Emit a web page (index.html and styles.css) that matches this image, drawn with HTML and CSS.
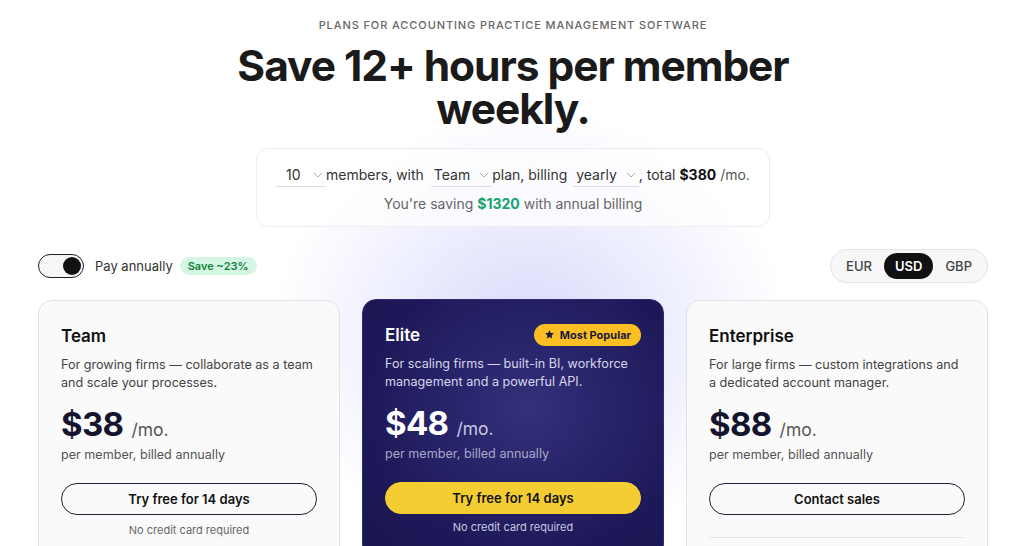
FILE: index.html
```html
<!DOCTYPE html>
<html lang="en">
<head>
<meta charset="utf-8">
<title>Pricing</title>
<link rel="stylesheet" href="styles.css">
</head>
<body>
<div class="glow"></div>
<main class="page">
  <header class="hero">
    <p class="eyebrow">Plans for accounting practice management software</p>
    <h1 class="title">Save 12+ hours per member<br>weekly.</h1>
  </header>

  <section class="calc">
    <div class="calc-row">
      <span class="sel sel-num"><span>10</span><svg class="chev" viewBox="0 0 10 6"><path d="M1 1l4 4 4-4"/></svg></span>members, with
      <span class="sel sel-plan"><span>Team</span><svg class="chev" viewBox="0 0 10 6"><path d="M1 1l4 4 4-4"/></svg></span>plan, billing
      <span class="sel sel-bill"><span>yearly</span><svg class="chev" viewBox="0 0 10 6"><path d="M1 1l4 4 4-4"/></svg></span>, total <strong>$380</strong> <span class="muted">/mo.</span>
    </div>
    <div class="calc-save">You're saving <strong class="green">$1320</strong> with annual billing</div>
  </section>

  <div class="controls">
    <div class="pay">
      <span class="toggle"><span class="knob"></span></span>
      <span class="pay-label">Pay annually</span>
      <span class="save-badge">Save ~23%</span>
    </div>
    <div class="currency">
      <span class="cur">EUR</span>
      <span class="cur active">USD</span>
      <span class="cur">GBP</span>
    </div>
  </div>

  <section class="cards">
    <article class="card">
      <h2 class="card-title">Team</h2>
      <p class="card-desc">For growing firms — collaborate as a team and scale your processes.</p>
      <div class="price"><span class="amount">$38</span><span class="per">/mo.</span></div>
      <p class="billed">per member, billed annually</p>
      <button class="btn">Try free for 14 days</button>
      <p class="note">No credit card required</p>
    </article>

    <article class="card card-elite">
      <div class="card-head">
        <h2 class="card-title">Elite</h2>
        <span class="popular"><svg class="star" viewBox="0 0 24 24"><path d="M12 2.5l2.9 6.1 6.6.8-4.9 4.6 1.3 6.6L12 17.3l-5.9 3.3 1.3-6.6-4.9-4.6 6.6-.8z"/></svg>Most Popular</span>
      </div>
      <p class="card-desc">For scaling firms — built-in BI, workforce management and a powerful API.</p>
      <div class="price"><span class="amount">$48</span><span class="per">/mo.</span></div>
      <p class="billed">per member, billed annually</p>
      <button class="btn btn-yellow">Try free for 14 days</button>
      <p class="note">No credit card required</p>
    </article>

    <article class="card">
      <h2 class="card-title">Enterprise</h2>
      <p class="card-desc">For large firms — custom integrations and a dedicated account manager.</p>
      <div class="price"><span class="amount">$88</span><span class="per">/mo.</span></div>
      <p class="billed">per member, billed annually</p>
      <button class="btn">Contact sales</button>
      <hr class="divider">
    </article>
  </section>
</main>
</body>
</html>
```

FILE: styles.css
```css
* { box-sizing: border-box; }
html, body { margin: 0; padding: 0; }
body {
  font-family: Inter, "Noto Sans", "Liberation Sans", sans-serif;
  color: #111;
  background: #fff;
  overflow: hidden;
  position: relative;
  min-height: 546px;
  padding-left: 2px;
}
.glow {
  position: absolute;
  left: 270px;
  top: 110px;
  width: 520px;
  height: 440px;
  background: radial-gradient(ellipse at center, rgba(170,172,245,0.45) 0%, rgba(190,192,250,0.25) 40%, rgba(255,255,255,0) 70%);
  pointer-events: none;
}
.page {
  position: relative;
  width: 950px;
  margin: 0 auto;
  padding-top: 18px;
}
.hero { text-align: center; }
.eyebrow {
  margin: 0;
  font-size: 11px;
  line-height: 14px;
  letter-spacing: 0.9px;
  text-transform: uppercase;
  color: #666;
  font-weight: 500;
}
.title {
  margin: 12px 0 0;
  font-size: 42.5px;
  line-height: 43px;
  font-weight: 700;
  letter-spacing: -0.025em;
  color: #1a1a1a;
}
.calc {
  width: 514px;
  margin: 18px auto 0;
  border: 1px solid #ececf2;
  border-radius: 12px;
  background: rgba(255,255,255,0.7);
  padding: 15px 0 12px;
  text-align: center;
  font-size: 14px;
  color: #333;
}
.calc-row { line-height: 22px; }
.calc-row strong { color: #111; font-weight: 700; }
.muted { color: #555; }
.sel {
  display: inline-flex;
  align-items: center;
  border-bottom: 1px solid #dcdce6;
  height: 22px;
  padding: 0 2px 0 3px;
  color: #333;
}
.sel-num { width: 50px; padding-left: 10px; }
.sel-num .chev { margin-left: auto; }
.sel-plan { margin-left: 3px; }
.sel-bill { margin-left: 2px; }
.chev {
  width: 10px;
  height: 6px;
  fill: none;
  stroke: #aaa;
  stroke-width: 1;
  margin-left: 9px;
  margin-right: 1px;
}
.calc-save {
  margin-top: 7px;
  line-height: 20px;
  color: #666;
}
.green { color: #16a36a; font-weight: 700; }

.controls {
  display: flex;
  justify-content: space-between;
  align-items: center;
  margin-top: 22px;
}
.pay { display: flex; align-items: center; }
.toggle {
  width: 46px;
  height: 24px;
  border: 1.5px solid #222;
  border-radius: 12px;
  background: #f6f6f8;
  display: flex;
  align-items: center;
  justify-content: flex-end;
  padding: 0 2px;
}
.knob { width: 18px; height: 18px; border-radius: 50%; background: #111; }
.pay-label { margin-left: 11px; font-size: 13px; color: #333; }
.save-badge {
  margin-left: 7px;
  background: #d4f6e2;
  color: #15803d;
  font-size: 11px;
  font-weight: 600;
  border-radius: 9px;
  padding: 2px 8px;
  line-height: 14px;
}
.currency {
  display: flex;
  align-items: center;
  border: 1px solid #e3e3e8;
  border-radius: 17px;
  height: 34px;
  padding: 0 3px;
  background: #f7f7f8;
}
.cur {
  font-size: 13px;
  font-weight: 500;
  color: #444;
  padding: 0 12px;
  height: 26px;
  line-height: 26px;
  border-radius: 13px;
}
.cur.active { background: #111; color: #fff; font-weight: 600; padding: 0 11px; }

.cards {
  display: grid;
  grid-template-columns: repeat(3, 302px);
  gap: 22px;
  margin-top: 17px;
}
.card {
  border: 1px solid #e2e2e6;
  border-radius: 14px;
  background: #fafafa;
  padding: 24px 22px 0;
  height: 260px;
}
.card-title {
  margin: 0;
  font-size: 17px;
  line-height: 22px;
  font-weight: 600;
  color: #111;
}
.card-desc {
  margin: 9px 0 0;
  font-size: 12.6px;
  line-height: 18px;
  color: #444;
}
.price { display: flex; align-items: baseline; margin-top: 13px; height: 38px; }
.amount { font-size: 33px; font-weight: 700; color: #14142e; letter-spacing: -0.02em; line-height: 38px; }
.per { font-size: 17.5px; color: #555; margin-left: 8px; }
.billed { margin: 3px 0 0; font-size: 12.6px; line-height: 18px; color: #555; }
.btn {
  display: block;
  width: 100%;
  margin-top: 19px;
  height: 32px;
  border: 1px solid #222236;
  border-radius: 16px;
  background: transparent;
  font-family: inherit;
  font-size: 13px;
  font-weight: 600;
  color: #111;
}
.note { margin: 8px 0 0; text-align: center; font-size: 11px; color: #666; line-height: 14px; }
.divider { border: 0; border-top: 1px solid #e6e6ea; margin: 22px 0 0; }

.card-elite {
  transform: translateY(-1px);
  border-color: #2e2a78;
  background: radial-gradient(ellipse at 55% 42%, #34317a 0%, #28246a 35%, #1d1958 70%, #1a1652 100%);
}
.card-elite .card-title { color: #fff; }
.card-head { display: flex; justify-content: space-between; align-items: center; }
.popular {
  display: inline-flex;
  align-items: center;
  background: #fbbf24;
  color: #1a1a3a;
  font-size: 11px;
  font-weight: 700;
  height: 22px;
  border-radius: 11px;
  padding: 0 10px;
}
.star { width: 11px; height: 11px; fill: #1a1a3a; margin-right: 5px; }
.card-elite .card-desc { color: #d6d5ea; }
.card-elite .amount { color: #fff; }
.card-elite .per { color: #c9c8e0; }
.card-elite .billed { color: #a9a8c8; }
.btn-yellow { background: #f4cd32; border-color: #f4cd32; color: #111; }
.card-elite .note { color: #c9c8e0; margin-top: 6px; }
```
